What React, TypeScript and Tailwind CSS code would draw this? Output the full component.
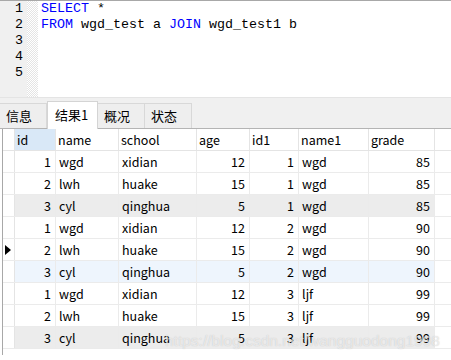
import React from "react";

const columns = [
  { key: "id", label: "id", w: "w-[41px]", right: true },
  { key: "name", label: "name", w: "w-[63px]", right: false },
  { key: "school", label: "school", w: "w-[78px]", right: false },
  { key: "age", label: "age", w: "w-[53px]", right: true },
  { key: "id1", label: "id1", w: "w-[49px]", right: true },
  { key: "name1", label: "name1", w: "w-[70px]", right: false },
  { key: "grade", label: "grade", w: "w-[66px]", right: true },
];

type Row = { cells: (string | number)[]; bg?: string; current?: boolean };

const rows: Row[] = [
  { cells: [1, "wgd", "xidian", 12, 1, "wgd", 85] },
  { cells: [2, "lwh", "huake", 15, 1, "wgd", 85] },
  { cells: [3, "cyl", "qinghua", 5, 1, "wgd", 85], bg: "bg-[#ececec]" },
  { cells: [1, "wgd", "xidian", 12, 2, "wgd", 90] },
  { cells: [2, "lwh", "huake", 15, 2, "wgd", 90], current: true },
  { cells: [3, "cyl", "qinghua", 5, 2, "wgd", 90], bg: "bg-[#eef5fd]" },
  { cells: [1, "wgd", "xidian", 12, 3, "ljf", 99] },
  { cells: [2, "lwh", "huake", 15, 3, "ljf", 99] },
  { cells: [3, "cyl", "qinghua", 5, 3, "ljf", 99], bg: "bg-[#ececec]" },
];

const tabs = ["信息", "结果1", "概况", "状态"];

export default function App() {
  return (
    <div className="relative w-[451px] h-[360px] bg-white overflow-hidden font-['Noto_Sans_CJK_SC','Noto_Sans',sans-serif] text-black">
      {/* 编辑器 */}
      <div className="h-[98px] border-t border-[#a8a8a8] flex border-b border-b-[#e4e4e4]">
        <div className="w-[27px] bg-[#f0f0f0] flex flex-col items-end pr-[4px] font-['Liberation_Mono',monospace] text-[13.33px] leading-[16px]">
          {[1, 2, 3, 4, 5].map((n) => (
            <div key={n}>{n}</div>
          ))}
        </div>
        <div className="w-[11px] bg-[repeating-conic-gradient(#e4e4e4_0_25%,#ffffff_0_50%)] bg-[length:2px_2px]" />
        <div className="pl-[3px] font-['Liberation_Mono',monospace] text-[13.33px] leading-[16px] whitespace-pre">
          <div>
            <span className="text-[#0000ff]">SELECT</span> *
          </div>
          <div>
            <span className="text-[#0000ff]">FROM</span> wgd_test a <span className="text-[#0000ff]">JOIN</span> wgd_test1 b
          </div>
        </div>
      </div>

      {/* 标签栏 */}
      <div className="h-[31px] bg-[#f0f0f0] flex items-end border-b border-[#b4b4b4] text-[13px]">
        {tabs.map((t, i) =>
          i === 1 ? (
            <div
              key={t}
              className="w-[51px] h-[28px] bg-white border border-b-0 border-[#d4d4d4] pl-[7px] pt-[2px] leading-[22px] -mb-px"
            >
              {t}
            </div>
          ) : (
            <div
              key={t}
              className="w-[47px] h-[25px] bg-[#eeeeee] border-r border-t border-[#d8d8d8] pl-[6px] leading-[24px]"
            >
              {t}
            </div>
          )
        )}
      </div>

      {/* 结果表格 */}
      <div className="ml-[2px] h-[226px] border-l border-[#a8a8a8] text-[12.5px]">
        <div className="flex h-[22px] border-b border-[#e4e4e4]">
          <div className="w-[12px] border-r border-[#e4e4e4]" />
          {columns.map((c) => (
            <div
              key={c.key}
              className={`${c.w} border-r border-[#e4e4e4] pl-[2px] leading-[21px] ${c.key === "id" ? "bg-[#d9e8f7]" : ""}`}
            >
              {c.label}
            </div>
          ))}
        </div>
        {rows.map((r, ri) => (
          <div key={ri} className="flex h-[22px] border-b border-[#ebebeb]">
            <div className="w-[12px] border-r border-[#e4e4e4] flex items-center pl-[2px]">
              {r.current && (
                <svg width="6" height="10" viewBox="0 0 6 10">
                  <path d="M0 0 L6 5 L0 10 Z" fill="#000" />
                </svg>
              )}
            </div>
            <div className={`flex ${r.bg ?? ""}`}>
              {columns.map((c, ci) => (
                <div
                  key={c.key}
                  className={`${c.w} border-r border-[#ebebeb] leading-[22px] ${c.right ? "text-right pr-[4px]" : "pl-[3px]"}`}
                >
                  {r.cells[ci]}
                </div>
              ))}
            </div>
          </div>
        ))}
      </div>

      {/* 水印 */}
      <div className="absolute left-[165px] top-[329px] font-['Liberation_Sans',sans-serif] text-[15.5px] text-white/60 [text-shadow:0_0_1px_rgba(120,120,120,0.4)] pointer-events-none">
        https://blog.csdn.net/wangguodong1998
      </div>
    </div>
  );
}
